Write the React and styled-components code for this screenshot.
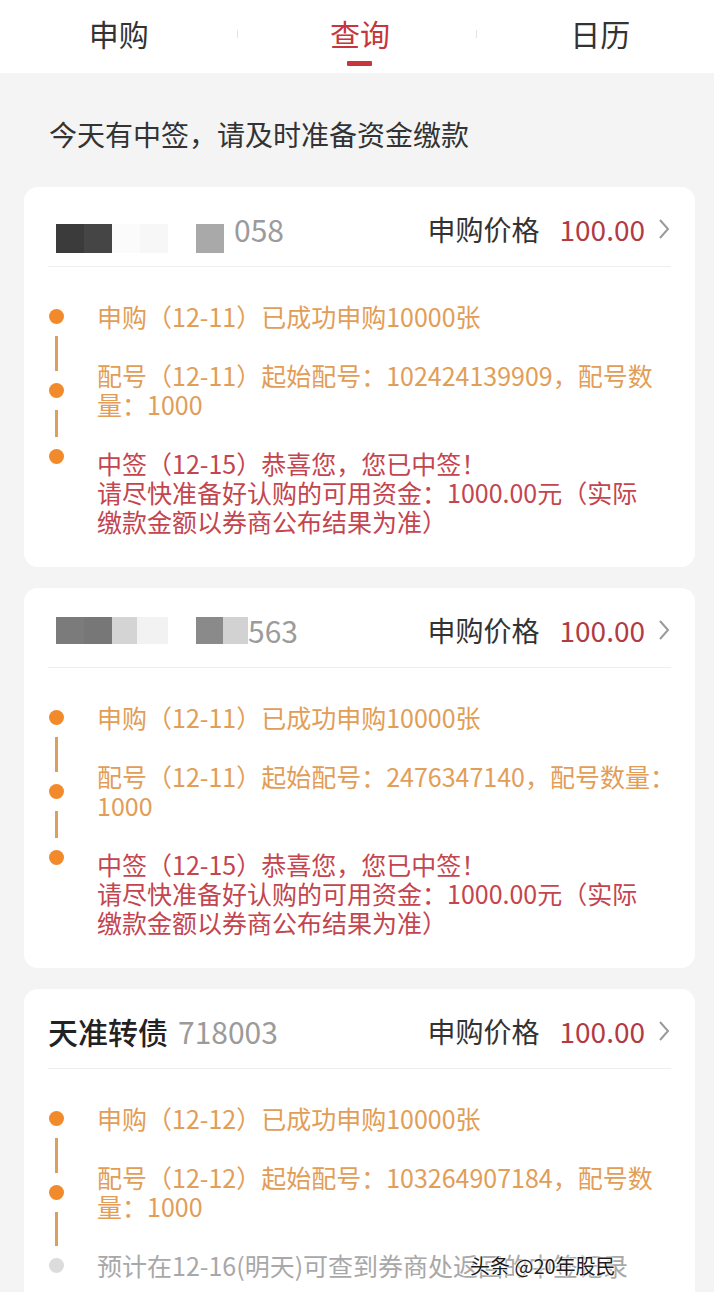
import React from 'react';
import styled, { createGlobalStyle } from 'styled-components';

const GlobalStyle = createGlobalStyle`
  html,
  body {
    margin: 0;
    padding: 0;
    background: #f4f4f4;
  }
  body {
    font-family: 'Noto Sans CJK SC', 'Noto Sans', sans-serif;
    color: #333333;
  }
`;

const Page = styled.div`
  position: relative;
  width: 714px;
  min-height: 1292px;
  background: #f4f4f4;
  overflow: hidden;
`;

const TabBar = styled.div`
  display: grid;
  grid-template-columns: 1fr 1px 1fr 1px 1fr;
  height: 73px;
  background: #ffffff;
`;
const Tab = styled.div`
  display: flex;
  flex-direction: column;
  align-items: center;
  padding-top: 15px;
  padding-left: ${(p) => p.$shift}px;
  font-size: 30px;
  line-height: 36px;
  color: ${(p) => (p.$active ? '#c6363c' : '#333333')};
`;
const TabMark = styled.div`
  width: 25px;
  height: 5px;
  margin-top: 10px;
  border-radius: 1px;
  background: ${(p) => (p.$active ? '#c6363c' : 'transparent')};
`;
const TabSep = styled.div`
  width: 1px;
  height: 8px;
  margin-top: 30px;
  background: #e4e4e4;
`;

const Notice = styled.div`
  padding: 47px 49px 39px;
  font-size: 28px;
  line-height: 28px;
  color: #333333;
`;

const CardList = styled.div`
  display: flex;
  flex-direction: column;
  gap: 21px;
  padding: 0 19px 0 24px;
`;
const Card = styled.div`
  background: #ffffff;
  border-radius: 14px;
  padding: 0 24px;
`;
const Header = styled.div`
  display: flex;
  align-items: center;
  height: 36px;
  padding: 24px 0 19px;
  border-bottom: 1px solid #eeeeee;
  line-height: 36px;
`;
const NameBox = styled.div`
  display: flex;
  align-items: center;
  flex: 1;
  min-width: 0;
`;
const Name = styled.span`
  font-size: 30px;
  font-weight: 500;
  color: #222222;
`;
const Code = styled.span`
  font-size: 30px;
  color: #9b9b9b;
  margin-left: ${(p) => (p.$gap != null ? p.$gap : 10)}px;
`;
const Mosaic = styled.div`
  display: flex;
  margin-left: 8px;
  margin-top: ${(p) => p.$offset}px;
  margin-bottom: ${(p) => -p.$offset}px;
`;
const Tile = styled.div`
  width: ${(p) => p.$w}px;
  height: ${(p) => p.$h}px;
  background: ${(p) => p.$c};
`;
const Label = styled.span`
  font-size: 28px;
  color: #333333;
`;
const Price = styled.span`
  font-size: 28px;
  color: #b23a43;
  margin-left: 20px;
`;
const Chevron = styled.svg`
  margin-left: 12px;
  flex-shrink: 0;
`;

const Steps = styled.div`
  padding: 20px 0 16px;
`;
const Step = styled.div`
  display: grid;
  grid-template-columns: 16px 1fr;
  column-gap: 33px;
`;
const Rail = styled.div`
  display: flex;
  flex-direction: column;
  align-items: center;
`;
const Connector = styled.div`
  flex: 1;
  width: 3px;
  background: ${(p) => (p.$hidden ? 'transparent' : '#dd9f5e')};
  margin: ${(p) => (p.$above ? '0 0 12px' : '12px 0 0')};
`;
const Dot = styled.div`
  width: 15px;
  height: 15px;
  border-radius: 50%;
  flex-shrink: 0;
  background: ${(p) => (p.$tone === 'gray' ? '#dcdcdc' : '#f28a2b')};
`;
const toneColor = { orange: '#e29d57', red: '#c4454e', gray: '#a8a8a8' };
const Body = styled.div`
  padding-top: ${(p) => p.$pt}px;
  padding-bottom: ${(p) => p.$pb}px;
  font-size: 25px;
  line-height: 29px;
  color: ${(p) => toneColor[p.$tone]};
`;
const TextLine = styled.div`
  white-space: nowrap;
`;

const Watermark = styled.div`
  position: absolute;
  left: 470px;
  top: 1253px;
  font-size: 20px;
  line-height: 26px;
  color: #1c1c1c;
  text-shadow: 0 0 2px #ffffff, 0 0 2px #ffffff, 0 0 3px #ffffff;
`;

const cards = [
  {
    mosaic: {
      offset: 9,
      h: 29,
      tiles: [
        [28, '#3b3b3b'],
        [28, '#454545'],
        [28, '#fbfbfb'],
        [28, '#f7f7f7'],
        [28, '#ffffff'],
        [28, '#a9a9a9'],
      ],
    },
    code: '058',
    codeGap: 10,
    steps: [
      { tone: 'orange', lines: ['申购（12-11）已成功申购10000张'] },
      { tone: 'orange', lines: ['配号（12-11）起始配号：102424139909，配号数', '量：1000'] },
      {
        tone: 'red',
        lines: ['中签（12-15）恭喜您，您已中签！'],
        desc: ['请尽快准备好认购的可用资金：1000.00元（实际', '缴款金额以券商公布结果为准）'],
      },
    ],
  },
  {
    mosaic: {
      offset: 0,
      h: 27,
      tiles: [
        [28, '#7b7b7b'],
        [28, '#777777'],
        [25, '#d4d4d4'],
        [31, '#f2f2f2'],
        [28, '#ffffff'],
        [27, '#8a8a8a'],
        [25, '#d2d2d2'],
      ],
    },
    code: '563',
    codeGap: 0,
    steps: [
      { tone: 'orange', lines: ['申购（12-11）已成功申购10000张'] },
      { tone: 'orange', lines: ['配号（12-11）起始配号：2476347140，配号数量：', '1000'] },
      {
        tone: 'red',
        lines: ['中签（12-15）恭喜您，您已中签！'],
        desc: ['请尽快准备好认购的可用资金：1000.00元（实际', '缴款金额以券商公布结果为准）'],
      },
    ],
  },
  {
    name: '天准转债',
    code: '718003',
    steps: [
      { tone: 'orange', lines: ['申购（12-12）已成功申购10000张'] },
      { tone: 'orange', lines: ['配号（12-12）起始配号：103264907184，配号数', '量：1000'] },
      { tone: 'gray', lines: ['预计在12-16(明天)可查到券商处返回的中签记录'] },
    ],
  },
];

function Timeline({ steps }) {
  return (
    <Steps>
      {steps.map((s, i) => {
        const first = i === 0;
        const last = i === steps.length - 1;
        return (
          <React.Fragment key={i}>
            <Step>
              <Rail>
                <Connector $above $hidden={first} />
                <Dot $tone={s.tone} />
                <Connector $hidden={last} />
              </Rail>
              <Body $tone={s.tone} $pt={15} $pb={s.desc ? 0 : 15}>
                {s.lines.map((l) => (
                  <TextLine key={l}>{l}</TextLine>
                ))}
              </Body>
            </Step>
            {s.desc && (
              <Step>
                <Rail>{!last && <Connector $above />}</Rail>
                <Body $tone={s.tone} $pt={0} $pb={15}>
                  {s.desc.map((l) => (
                    <TextLine key={l}>{l}</TextLine>
                  ))}
                </Body>
              </Step>
            )}
          </React.Fragment>
        );
      })}
    </Steps>
  );
}

function BondCard({ card }) {
  return (
    <Card>
      <Header>
        <NameBox>
          {card.name ? (
            <Name>{card.name}</Name>
          ) : (
            <Mosaic $offset={card.mosaic.offset}>
              {card.mosaic.tiles.map(([w, c], i) => (
                <Tile key={i} $w={w} $h={card.mosaic.h} $c={c} />
              ))}
            </Mosaic>
          )}
          <Code $gap={card.codeGap}>{card.code}</Code>
        </NameBox>
        <Label>申购价格</Label>
        <Price>100.00</Price>
        <Chevron width="14" height="24" viewBox="0 0 14 24">
          <path d="M3 3 L11 12 L3 21" fill="none" stroke="#9a9a9a" strokeWidth="2" />
        </Chevron>
      </Header>
      <Timeline steps={card.steps} />
    </Card>
  );
}

export default function App() {
  const tabs = ['申购', '查询', '日历'];
  const shifts = [0, 6, 10];
  return (
    <Page>
      <GlobalStyle />
      <TabBar>
        {tabs.map((t, i) => (
          <React.Fragment key={t}>
            {i > 0 && <TabSep />}
            <Tab $active={i === 1} $shift={shifts[i]}>
              {t}
              <TabMark $active={i === 1} />
            </Tab>
          </React.Fragment>
        ))}
      </TabBar>
      <Notice>今天有中签，请及时准备资金缴款</Notice>
      <CardList>
        {cards.map((c, i) => (
          <BondCard key={i} card={c} />
        ))}
      </CardList>
      <Watermark>头条 @20年股民</Watermark>
    </Page>
  );
}
